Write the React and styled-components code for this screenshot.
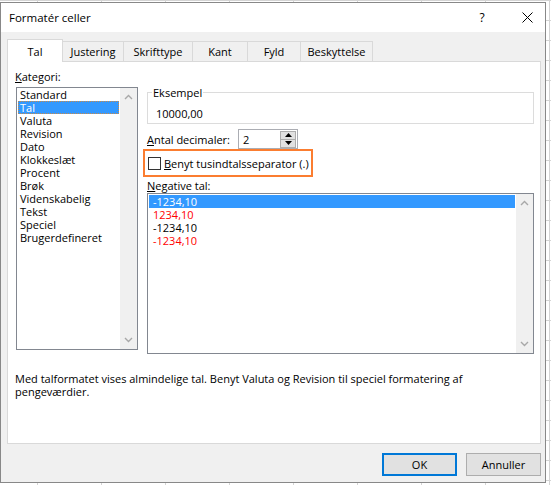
import React from "react";
import styled, { createGlobalStyle } from "styled-components";

const GlobalStyle = createGlobalStyle`
  body {
    margin: 0;
    background-color: #ffffff;
    background-image:
      linear-gradient(to right, #d4d4d4 1px, transparent 1px),
      linear-gradient(to bottom, #d4d4d4 1px, transparent 1px);
    background-size: 64px 20px;
    background-position: 37px 0;
    font-family: "Open Sans", "Noto Sans", sans-serif;
    font-size: 11px;
    color: #000;
  }
`;

const Dialog = styled.div`
  width: 546px;
  height: 481px;
  margin-top: 2px;
  box-sizing: border-box;
  border: 1px solid #888888;
  background: #f0f0f0;
  display: flex;
  flex-direction: column;
`;

const TitleBar = styled.div`
  height: 29px;
  background: #ffffff;
  display: flex;
  align-items: center;
  padding-left: 8px;
  gap: 9px;
`;

const Title = styled.div`
  flex: 1;
  font-size: 11.5px;
`;

const TitleButton = styled.div`
  width: 36px;
  height: 29px;
  display: flex;
  align-items: center;
  justify-content: center;
  font-size: 12px;
`;

const Body = styled.div`
  flex: 1;
  padding: 7px 4px 0 6px;
  display: flex;
  flex-direction: column;
`;

const TabRow = styled.div`
  display: flex;
  align-items: flex-end;
  height: 22px;
  position: relative;
  z-index: 1;
`;

const Tab = styled.div`
  width: ${(p) => p.$w}px;
  height: ${(p) => (p.$active ? 23 : 20)}px;
  margin-bottom: ${(p) => (p.$active ? -1 : 0)}px;
  margin-right: -1px;
  box-sizing: border-box;
  border: 1px solid #d9d9d9;
  border-bottom: none;
  background: ${(p) => (p.$active ? "#ffffff" : "#f0f0f0")};
  display: flex;
  align-items: flex-end;
  justify-content: center;
  padding-bottom: ${(p) => (p.$active ? 3 : 2)}px;
  line-height: 15px;
`;

const Pane = styled.div`
  height: 383px;
  box-sizing: border-box;
  background: #ffffff;
  border: 1px solid #d9d9d9;
  padding: 7px 0 0 7px;
`;

const Columns = styled.div`
  display: grid;
  grid-template-columns: 123px 387px;
  column-gap: 9px;
  align-items: start;
`;

const Column = styled.div`
  display: flex;
  flex-direction: column;
  align-items: flex-start;
`;

const Label = styled.div`
  line-height: 15px;
  margin-top: ${(p) => p.$top || 0}px;
  white-space: nowrap;
`;

const Key = styled.span`
  text-decoration: underline;
  text-underline-offset: 1px;
`;

const ListBox = styled.div`
  width: ${(p) => p.$w}px;
  height: ${(p) => p.$h}px;
  margin-left: ${(p) => p.$left || 0}px;
  margin-top: ${(p) => p.$top || 0}px;
  box-sizing: border-box;
  border: 1px solid #828790;
  background: #ffffff;
  display: flex;
`;

const Items = styled.div`
  flex: 1;
  padding-top: ${(p) => p.$padTop || 0}px;
`;

const Item = styled.div`
  height: 13px;
  line-height: 13px;
  margin: 0 1px;
  padding-left: ${(p) => p.$indent}px;
  white-space: nowrap;
  background: ${(p) => (p.$selected ? "#3399ff" : "transparent")};
  color: ${(p) => (p.$selected ? "#ffffff" : p.$red ? "#ff0000" : "#000000")};
  outline: ${(p) => (p.$focus ? "1px dotted #c98a48" : "none")};
  outline-offset: -1px;
`;

const ScrollTrack = styled.div`
  width: 17px;
  background: #f0f0f0;
  display: flex;
  flex-direction: column;
  justify-content: space-between;
  align-items: center;
  padding: 6px 0;
  box-sizing: border-box;
`;

const Chevron = ({ down }) => (
  <svg width="9" height="6" viewBox="0 0 9 6">
    <polyline
      points={down ? "1,1 4.5,4.5 8,1" : "1,5 4.5,1.5 8,5"}
      fill="none"
      stroke="#a8a8a8"
      strokeWidth="1.4"
    />
  </svg>
);

const Group = styled.div`
  width: 387px;
  height: 32px;
  margin-top: 23px;
  box-sizing: border-box;
  border: 1px solid #dcdcdc;
  padding-left: 4px;
`;

const GroupLabel = styled.div`
  width: fit-content;
  margin-top: -8px;
  padding: 0 1px;
  background: #ffffff;
  line-height: 15px;
`;

const GroupValue = styled.div`
  margin: 6px 0 0 4px;
  line-height: 15px;
`;

const DecimalRow = styled.div`
  display: flex;
  align-items: center;
  height: 20px;
  margin-top: 5px;
`;

const DecimalLabel = styled.div`
  width: 91px;
  line-height: 15px;
`;

const SpinBox = styled.div`
  width: 60px;
  height: 20px;
  box-sizing: border-box;
  border: 1px solid #abadb3;
  display: flex;
  align-items: center;
  justify-content: space-between;
  padding: 0 1px 0 4px;
`;

const SpinButtons = styled.div`
  width: 16px;
  height: 17px;
  display: flex;
  flex-direction: column;
`;

const SpinButton = styled.div`
  flex: 1;
  box-sizing: border-box;
  border: 1px solid #adadad;
  margin-top: ${(p) => (p.$down ? -1 : 0)}px;
  background: #e1e1e1;
  display: flex;
  align-items: center;
  justify-content: center;
`;

const Arrow = ({ down }) => (
  <svg width="7" height="4" viewBox="0 0 7 4">
    <polygon points={down ? "0,0 7,0 3.5,4" : "0,4 7,4 3.5,0"} fill="#000" />
  </svg>
);

const Highlight = styled.div`
  display: inline-flex;
  align-items: center;
  gap: 3px;
  height: 28px;
  box-sizing: border-box;
  margin-left: -4px;
  border: 2px solid #fb7d30;
  padding: 0 2px 0 3px;
`;

const CheckBox = styled.div`
  width: 13px;
  height: 13px;
  box-sizing: border-box;
  border: 1px solid #333333;
  background: #ffffff;
`;

const Description = styled.div`
  width: 480px;
  margin-top: 18px;
  line-height: 13px;
`;

const Footer = styled.div`
  display: flex;
  justify-content: flex-end;
  gap: 9px;
  margin-top: 9px;
`;

const Button = styled.div`
  width: 75px;
  height: 23px;
  box-sizing: border-box;
  border: ${(p) => (p.$default ? "2px solid #0078d7" : "1px solid #adadad")};
  background: #e1e1e1;
  display: flex;
  align-items: center;
  justify-content: center;
`;

const tabs = [
  { name: "Tal", w: 56 },
  { name: "Justering", w: 62 },
  { name: "Skrifttype", w: 70 },
  { name: "Kant", w: 56 },
  { name: "Fyld", w: 54 },
  { name: "Beskyttelse", w: 73 },
];

const categories = [
  "Standard",
  "Tal",
  "Valuta",
  "Revision",
  "Dato",
  "Klokkeslæt",
  "Procent",
  "Brøk",
  "Videnskabelig",
  "Tekst",
  "Speciel",
  "Brugerdefineret",
];

const negatives = [
  { text: "-1234,10", red: false },
  { text: "1234,10", red: true },
  { text: "-1234,10", red: false },
  { text: "-1234,10", red: true },
];

export default function App() {
  return (
    <>
      <GlobalStyle />
      <Dialog>
        <TitleBar>
          <Title>Formatér celler</Title>
          <TitleButton>?</TitleButton>
          <TitleButton>
            <svg width="11" height="11" viewBox="0 0 11 11">
              <path d="M0.5 0.5 L10.5 10.5 M10.5 0.5 L0.5 10.5" stroke="#000" strokeWidth="1" />
            </svg>
          </TitleButton>
        </TitleBar>
        <Body>
          <TabRow>
            {tabs.map((t, i) => (
              <Tab key={t.name} $w={t.w} $active={i === 0}>
                {t.name}
              </Tab>
            ))}
          </TabRow>
          <Pane>
            <Columns>
              <Column>
                <Label>
                  <Key>K</Key>ategori:
                </Label>
                <ListBox $w={122} $h={263} $left={1} $top={3}>
                  <Items>
                    {categories.map((c, i) => (
                      <Item key={c} $indent={2} $selected={i === 1} $focus={i === 1}>
                        {c}
                      </Item>
                    ))}
                  </Items>
                  <ScrollTrack>
                    <Chevron />
                    <Chevron down />
                  </ScrollTrack>
                </ListBox>
              </Column>
              <Column>
                <Group>
                  <GroupLabel>Eksempel</GroupLabel>
                  <GroupValue>10000,00</GroupValue>
                </Group>
                <DecimalRow>
                  <DecimalLabel>
                    <Key>A</Key>ntal decimaler:
                  </DecimalLabel>
                  <SpinBox>
                    <span>2</span>
                    <SpinButtons>
                      <SpinButton>
                        <Arrow />
                      </SpinButton>
                      <SpinButton $down>
                        <Arrow down />
                      </SpinButton>
                    </SpinButtons>
                  </SpinBox>
                </DecimalRow>
                <Highlight>
                  <CheckBox />
                  <Label>
                    <Key>B</Key>enyt tusindtalsseparator (.)
                  </Label>
                </Highlight>
                <Label $top={1}>
                  <Key>N</Key>egative tal:
                </Label>
                <ListBox $w={387} $h={161}>
                  <Items $padTop={1}>
                    {negatives.map((n, i) => (
                      <Item key={i} $indent={4} $selected={i === 0} $red={n.red}>
                        {n.text}
                      </Item>
                    ))}
                  </Items>
                  <ScrollTrack>
                    <Chevron />
                    <Chevron down />
                  </ScrollTrack>
                </ListBox>
              </Column>
            </Columns>
            <Description>
              Med talformatet vises almindelige tal. Benyt Valuta og Revision til speciel formatering af
              pengeværdier.
            </Description>
          </Pane>
          <Footer>
            <Button $default>OK</Button>
            <Button>Annuller</Button>
          </Footer>
        </Body>
      </Dialog>
    </>
  );
}
